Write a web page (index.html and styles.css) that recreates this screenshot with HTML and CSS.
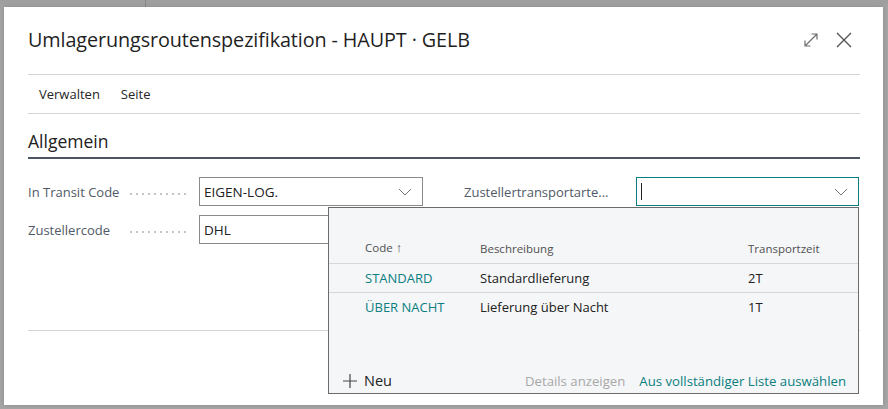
FILE: index.html
```html
<!DOCTYPE html>
<html lang="de">
<head>
<meta charset="utf-8">
<title>Umlagerungsroutenspezifikation</title>
<link rel="stylesheet" href="styles.css">
</head>
<body>
<div class="backdrop">
  <div class="bg-strip"></div>
  <div class="dialog">
    <div class="header">
      <h1 class="title">Umlagerungsroutenspezifikation - HAUPT · GELB</h1>
      <div class="header-icons">
        <svg class="icon" width="16" height="16" viewBox="0 0 16 16"><path d="M2 14 L14 2 M8.5 2 H14 V7.5 M2 8.5 V14 H7.5" fill="none" stroke="#6e6e6e" stroke-width="1.2"/></svg>
        <svg class="icon close" width="18" height="18" viewBox="0 0 18 18"><path d="M2 2 L16 16 M16 2 L2 16" fill="none" stroke="#555" stroke-width="1.4"/></svg>
      </div>
    </div>
    <div class="menu">
      <span class="menu-item">Verwalten</span>
      <span class="menu-item">Seite</span>
    </div>
    <div class="section">
      <h2 class="section-title">Allgemein</h2>
    </div>
    <div class="fields">
      <div class="col">
        <div class="field">
          <span class="label">In Transit Code</span>
          <span class="dots"></span>
          <div class="input"><span class="value">EIGEN-LOG.</span><svg class="chev" width="14" height="8" viewBox="0 0 14 8"><path d="M1 1 L7 7 L13 1" fill="none" stroke="#777" stroke-width="1"/></svg></div>
        </div>
        <div class="field">
          <span class="label">Zustellercode</span>
          <span class="dots"></span>
          <div class="input"><span class="value">DHL</span></div>
        </div>
      </div>
      <div class="col col-right">
        <div class="field">
          <span class="label label-right">Zustellertransportarte...</span>
          <span class="dots dots-short"></span>
          <div class="input input-focus"><span class="cursor"></span><svg class="chev" width="14" height="8" viewBox="0 0 14 8"><path d="M1 1 L7 7 L13 1" fill="none" stroke="#777" stroke-width="1"/></svg></div>
        </div>
      </div>
    </div>
    <div class="bottom-sep"></div>

    <div class="dropdown">
      <div class="dd-row dd-head">
        <span class="c1">Code <span class="arrow">&#8593;</span></span>
        <span class="c2">Beschreibung</span>
        <span class="c3">Transportzeit</span>
      </div>
      <div class="dd-row dd-item">
        <span class="c1 link">STANDARD</span>
        <span class="c2">Standardlieferung</span>
        <span class="c3">2T</span>
      </div>
      <div class="dd-row dd-item last">
        <span class="c1 link">ÜBER NACHT</span>
        <span class="c2">Lieferung über Nacht</span>
        <span class="c3">1T</span>
      </div>
      <div class="dd-footer">
        <span class="new"><svg width="16" height="16" viewBox="0 0 16 16"><path d="M8 1 V15 M1 8 H15" stroke="#444" stroke-width="1.2"/></svg>Neu</span>
        <span class="details">Details anzeigen</span>
        <span class="full link">Aus vollständiger Liste auswählen</span>
      </div>
    </div>
  </div>
</div>
</body>
</html>
```
FILE: styles.css
```css
html, body {
  margin: 0;
  padding: 0;
}
body {
  width: 888px;
  height: 409px;
  overflow: hidden;
  background: #a4a4a4;
  font-family: "Open Sans", "Noto Sans", "Liberation Sans", sans-serif;
  color: #212121;
}
.backdrop {
  position: relative;
  width: 888px;
  height: 409px;
  background: linear-gradient(#9e9e9e 0, #a6a6a6 8px, #a7a7a7 100%);
}
.bg-strip {
  position: absolute;
  left: 145px;
  top: 0;
  width: 1px;
  height: 7px;
  background: #8a8a8a;
}
.dialog {
  position: absolute;
  left: 4px;
  top: 7px;
  width: 879px;
  height: 398px;
  background: #fff;
  box-sizing: border-box;
  padding: 0 23px 0 24px;
  box-shadow: 0 0 6px rgba(0,0,0,0.18);
}
.header {
  height: 67px;
  display: flex;
  align-items: center;
  justify-content: space-between;
  border-bottom: 1px solid #d4d4d4;
}
.title {
  margin: 0;
  font-size: 19.8px;
  font-weight: 400;
  letter-spacing: -0.1px;
  color: #1f1f1f;
  padding-bottom: 2px;
}
.header-icons {
  display: flex;
  align-items: center;
  gap: 16px;
  margin-right: 7px;
  padding-bottom: 2px;
}
.icon { display: block; }
.menu {
  height: 38px;
  display: flex;
  align-items: center;
  gap: 21px;
  padding-left: 11px;
  border-bottom: 1px solid #d4d4d4;
  font-size: 13px;
  color: #262626;
}
.section {
  height: 43px;
  display: flex;
  align-items: flex-end;
  border-bottom: 2px solid #4d5563;
}
.section-title {
  margin: 0 0 4px 0;
  font-size: 17.5px;
  font-weight: 500;
  color: #212121;
}
.fields {
  display: flex;
  padding-top: 18px;
}
.col {
  display: flex;
  flex-direction: column;
  gap: 9px;
  width: 436px;
}
.col-right {
  width: 395px;
}
.field {
  display: flex;
  align-items: center;
  height: 29px;
}
.label {
  font-size: 13px;
  color: #505a66;
  white-space: nowrap;
}
.label-right {
  width: 148px;
}
.dots {
  flex: 1;
  height: 2px;
  margin: 4px 10px 0 8px;
  background-image: radial-gradient(circle, #c4c4c4 0.9px, transparent 1px);
  background-size: 6px 2px;
  background-repeat: repeat-x;
  background-position: right;
}
.dots-short {
  flex: 0 0 2px;
  margin: 4px 10px 0 12px;
}
.input {
  width: 224px;
  height: 29px;
  box-sizing: border-box;
  border: 1px solid #8a8a8a;
  display: flex;
  align-items: center;
  justify-content: space-between;
  padding: 0 10px 0 4px;
  font-size: 13.5px;
  color: #212121;
}
.field .input { margin-left: auto; }
.col:first-child .input { margin-left: 0; }
.col:first-child .dots { flex: 0 0 auto; width: 60px; margin-right: 11px; }
.col:first-child .label { width: 92px; }
.input-focus {
  width: 223px;
  border-color: #0a7e80;
  padding-left: 4px;
}
.cursor {
  display: block;
  width: 1px;
  height: 17px;
  background: #222;
}
.chev { display: block; }
.bottom-sep {
  margin-top: 86px;
  height: 1px;
  background: #d4d4d4;
}
.dropdown {
  position: absolute;
  left: 324px;
  top: 200px;
  width: 531px;
  height: 187px;
  box-sizing: border-box;
  background: #f5f6f8;
  border: 1px solid #6b6b6b;
  font-size: 13px;
}
.dd-row {
  display: flex;
  align-items: center;
  border-bottom: 1px solid #d6d7da;
}
.dd-row .c1 { width: 115px; padding-left: 36px; }
.dd-row .c2 { width: 268px; }
.dd-row .c3 { flex: 1; }
.dd-head {
  height: 56px;
  align-items: flex-end;
  box-sizing: border-box;
  padding-bottom: 7px;
  font-size: 11.5px;
  color: #505050;
}
.arrow { font-size: 13px; }
.dd-item {
  height: 28px;
}
.dd-item.last { border-bottom: none; }
.link { color: #0a7e80; }
.dd-footer {
  position: absolute;
  left: 0;
  right: 0;
  bottom: 3px;
  display: flex;
  align-items: center;
  padding: 0 12px 0 13px;
  font-size: 13.2px;
}
.new {
  display: flex;
  align-items: center;
  gap: 6px;
  font-size: 14.5px;
  color: #212121;
}
.details {
  margin-left: auto;
  color: #a8a8a8;
}
.full {
  margin-left: 14px;
}
```
